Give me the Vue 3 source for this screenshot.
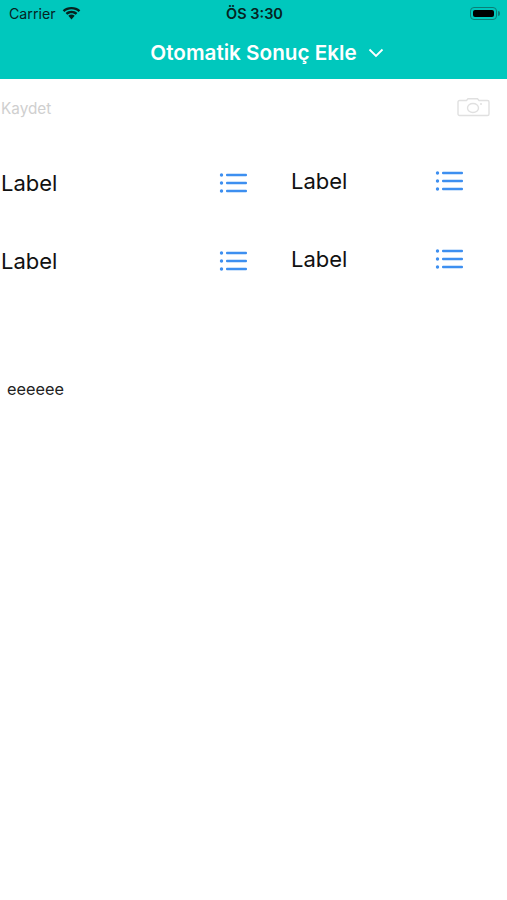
<template>
  <div class="screen">
    <header class="top-bar">
      <div class="status-bar">
        <div class="status-left">
          <span class="carrier">Carrier</span>
          <svg class="wifi" width="19" height="14" viewBox="0 0 19 14">
            <path d="M9.500 2.300c2.700 0 5.200 1 7.100 2.800l1.700-1.900C15.900 1 12.900 0 9.500 0S3.100 1 .7 3.200l1.700 1.900C4.300 3.300 6.800 2.300 9.500 2.300z" fill="#06231f" />
            <path d="M9.500 6.200c1.600 0 3.100.6 4.300 1.600l1.600-1.900C13.800 4.500 11.800 3.700 9.500 3.700S5.200 4.500 3.600 5.900l1.600 1.900c1.200-1 2.700-1.600 4.300-1.600z" fill="#06231f" />
            <path d="M9.500 7.600c-1.200 0-2.300.4-3.200 1.200l3.200 3.800 3.200-3.800c-.9-.8-2-1.200-3.200-1.200z" fill="#06231f" />
          </svg>
        </div>
        <span class="clock">ÖS 3:30</span>
        <div class="battery">
          <div class="battery-body"><div class="battery-level"></div></div>
          <div class="battery-cap"></div>
        </div>
      </div>
      <div class="nav-title">
        <span>Otomatik Sonuç Ekle</span>
        <svg width="16" height="10" viewBox="0 0 16 10">
          <path d="M1.500 1.500 8 8l6.500-6.500" fill="none" stroke="#fff" stroke-width="1.800" />
        </svg>
      </div>
    </header>

    <div class="actions">
      <span class="save">Kaydet</span>
      <svg class="camera" width="33" height="19" viewBox="0 0 33 19">
        <path d="M2.500 2.500h7l1.500-1.800h9.500l1.500 1.800h8.500a1.500 1.500 0 0 1 1.500 1.500v12a1.500 1.500 0 0 1-1.500 1.500H2.500A1.500 1.500 0 0 1 1 16V4a1.500 1.500 0 0 1 1.500-1.500z" fill="none" stroke="#e0e0e0" stroke-width="1.400" />
        <ellipse cx="16" cy="10" rx="5.500" ry="4.500" fill="none" stroke="#e0e0e0" stroke-width="1.400" />
        <circle cx="24" cy="6" r="1" fill="#e0e0e0" />
      </svg>
    </div>

    <div class="pickers">
      <div class="picker-col left">
        <div v-for="n in 2" :key="n" class="picker">
          <span class="label">Label</span>
          <svg class="list-icon" width="28" height="20" viewBox="0 0 28 20">
            <g fill="#3d8ff0">
              <circle cx="2.500" cy="2" r="1.700" />
              <circle cx="2.500" cy="10" r="1.700" />
              <circle cx="2.500" cy="18" r="1.700" />
              <rect x="7" y="0.800" width="21" height="2.400" rx="1" />
              <rect x="7" y="8.800" width="21" height="2.400" rx="1" />
              <rect x="7" y="16.800" width="21" height="2.400" rx="1" />
            </g>
          </svg>
        </div>
      </div>
      <div class="picker-col right">
        <div v-for="n in 2" :key="n" class="picker">
          <span class="label">Label</span>
          <svg class="list-icon" width="28" height="20" viewBox="0 0 28 20">
            <g fill="#3d8ff0">
              <circle cx="2.500" cy="2" r="1.700" />
              <circle cx="2.500" cy="10" r="1.700" />
              <circle cx="2.500" cy="18" r="1.700" />
              <rect x="7" y="0.800" width="21" height="2.400" rx="1" />
              <rect x="7" y="8.800" width="21" height="2.400" rx="1" />
              <rect x="7" y="16.800" width="21" height="2.400" rx="1" />
            </g>
          </svg>
        </div>
      </div>
    </div>

    <p class="result">eeeeee</p>
  </div>
</template>

<script setup>
</script>

<style>
body {
  background: #fff;
}
</style>

<style scoped>
.screen {
  height: 900px;
  overflow: hidden;
  background: #fff;
  font-family: Inter, "Liberation Sans", sans-serif;
}

.top-bar {
  height: 79px;
  background: #00c8bd;
}

.status-bar {
  height: 27px;
  display: grid;
  grid-template-columns: 1fr auto 1fr;
  align-items: center;
  padding: 0 7px 0 9px;
  color: #06231f;
}

.status-left {
  display: flex;
  align-items: center;
  gap: 6px;
}

.carrier {
  font-size: 14.200px;
}

.clock {
  font-size: 14.500px;
  font-weight: 600;
}

.battery {
  justify-self: end;
  display: flex;
  align-items: center;
  gap: 1px;
}

.battery-body {
  width: 27px;
  height: 13px;
  padding: 2px;
  box-sizing: border-box;
  border: 1px solid #0b7f78;
  border-radius: 4px;
}

.battery-level {
  height: 100%;
  background: #000;
  border-radius: 2px;
}

.battery-cap {
  width: 2px;
  height: 5px;
  background: #0b7f78;
  border-radius: 0 2px 2px 0;
}

.nav-title {
  height: 52px;
  padding: 0 0 1px 27px;
  box-sizing: border-box;
  display: flex;
  align-items: center;
  justify-content: center;
  gap: 11px;
  color: #fff;
  font-size: 20.700px;
  font-weight: 600;
}

.actions {
  height: 58px;
  display: flex;
  align-items: center;
  justify-content: space-between;
  padding: 0 17px 0 1px;
}

.camera {
  margin-bottom: 2px;
}

.save {
  font-size: 15.300px;
  color: #cfcfcf;
}

.pickers {
  display: flex;
}

.picker-col {
  display: flex;
  flex-direction: column;
  gap: 48px;
}

.picker-col.left {
  width: 247px;
  box-sizing: border-box;
  padding: 31px 0 0 1px;
}

.picker-col.right {
  width: 172px;
  margin-left: 44px;
  padding-top: 29px;
}

.picker {
  height: 30px;
  display: flex;
  align-items: center;
  justify-content: space-between;
}

.label {
  font-size: 22px;
  color: #111;
}

.result {
  margin: 103px 0 0 7px;
  font-size: 16.300px;
  color: #222;
}
</style>
